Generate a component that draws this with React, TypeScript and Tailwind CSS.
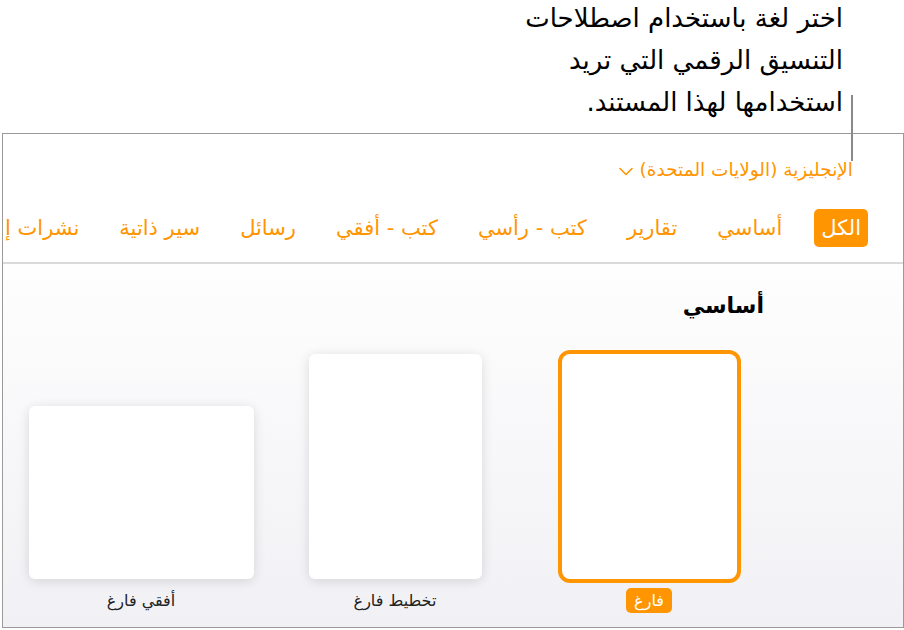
import React from "react";

const tabs = ["الكل", "أساسي", "تقارير", "كتب - رأسي", "كتب - أفقي", "رسائل", "سير ذاتية", "نشرات إعلانية", "بطاقات"];

function Card({ w, h, label, selected }: { w: number; h: number; label: string; selected?: boolean }) {
  return (
    <div className="w-[254px] flex flex-col items-center shrink-0">
      <div
        className={
          selected
            ? "bg-white rounded-[8px] ring-4 ring-[#ff9500]"
            : "bg-white rounded-[6px] shadow-[0_2px_12px_rgba(0,0,0,0.13)]"
        }
        style={{ width: w, height: h }}
      />
      {selected ? (
        <div className="mt-[9px] h-[25px] px-[8px] rounded-[5px] bg-[#ff9500] text-white text-[16px] leading-[25px]">
          {label}
        </div>
      ) : (
        <div className="mt-[9px] h-[25px] text-[#222] text-[16px] leading-[25px]">{label}</div>
      )}
    </div>
  );
}

export default function App() {
  return (
    <div dir="rtl" className="w-[904px] h-[630px] bg-white relative overflow-hidden font-['DejaVu_Sans',sans-serif]">
      {/* callout */}
      <div className="h-[133px] pr-[61px] text-[26px] leading-[42px] text-black -mt-[3px]">
        <div>اختر لغة باستخدام اصطلاحات</div>
        <div>التنسيق الرقمي التي تريد</div>
        <div>استخدامها لهذا المستند.</div>
      </div>
      <div className="absolute left-[851px] top-[95px] w-[2px] h-[66px] bg-[#8a8a8a]" />

      {/* frame */}
      <div className="w-[902px] h-[495px] mt-[3px] border border-[#9a9a9a] overflow-hidden flex flex-col">
        <div className="bg-white">
          <div className="pt-[24px] pr-[50px] flex items-center h-[48px] text-[18.5px] leading-[24px] text-[#ff9500]">
            <span>الإنجليزية (الولايات المتحدة)</span>
            <svg className="mr-[7px] mt-[2px]" width="14" height="9" viewBox="0 0 14 9" fill="none">
              <path d="M1 1.5 L7 7.5 L13 1.5" stroke="#ff9500" strokeWidth="1.6" strokeLinecap="round" strokeLinejoin="round" />
            </svg>
          </div>
          <div className="mt-[27px] pr-[35px] flex items-center gap-[24px] h-[38px] whitespace-nowrap">
            {tabs.map((t, i) => (
              <div
                key={t}
                className={
                  i === 0
                    ? "h-[38px] px-[7px] rounded-[5px] bg-[#ff9500] text-white text-[21px] leading-[38px] shrink-0"
                    : "h-[38px] px-[8px] text-[#ff9500] text-[21px] leading-[38px] shrink-0"
                }
              >
                {t}
              </div>
            ))}
          </div>
          <div className="mt-[15px] h-[2px] bg-[#dadada]" />
        </div>
        <div className="flex-1 bg-linear-to-b from-[#fefefe] to-[#f1f1f5]">
          <div className="pt-[26px] pr-[139px] text-[22px] leading-[32px] font-bold text-black">أساسي</div>
          <div className="mt-[32px] pr-[127px] flex items-end">
            <Card w={175} h={225} label="فارغ" selected />
            <Card w={173} h={225} label="تخطيط فارغ" />
            <Card w={225} h={173} label="أفقي فارغ" />
          </div>
        </div>
      </div>
    </div>
  );
}
